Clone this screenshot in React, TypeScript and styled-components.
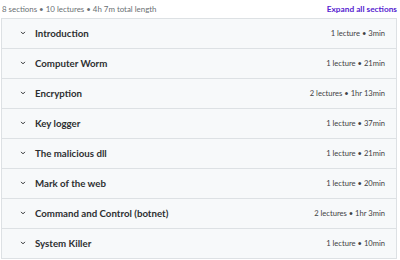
import { createGlobalStyle } from 'styled-components';
import styled from 'styled-components';

const GlobalStyle = createGlobalStyle`
  html, body {
    margin: 0;
    padding: 0;
    background: #ffffff;
    font-family: Lato, "Noto Sans", sans-serif;
    color: #2d2f31;
  }
`;

const Page = styled.div`
  width: 396px;
  padding: 0 0 0 1px;
`;

const Summary = styled.div`
  display: flex;
  align-items: center;
  justify-content: space-between;
  height: 17px;
  padding: 0 0 1px 1px;
`;

const Stats = styled.span`
  font-size: 7.9px;
  color: #6a6f73;
`;

const ExpandAll = styled.button`
  border: none;
  background: none;
  padding: 0;
  font-family: inherit;
  font-size: 8.3px;
  font-weight: 700;
  color: #5624d0;
  cursor: pointer;
`;

const Sections = styled.div`
  border: 1px solid #dde1e4;
  border-bottom: none;
`;

const Row = styled.div`
  display: flex;
  align-items: center;
  height: 29px;
  padding: 0 11px 1px 17px;
  box-sizing: border-box;
  background: #f7f9fa;
  border-bottom: 1px solid #dde1e4;
  height: 30px;
`;

const Chevron = styled.svg`
  width: 8px;
  height: 8px;
  margin-right: 8px;
  flex: none;
`;

const Title = styled.span`
  flex: 1;
  font-size: 9.7px;
  font-weight: 700;
  color: #2d2f31;
`;

const Meta = styled.span`
  font-size: 7.6px;
  color: #3e4143;
`;

const sections = [
  ['Introduction', '1 lecture', '3min'],
  ['Computer Worm', '1 lecture', '21min'],
  ['Encryption', '2 lectures', '1hr 13min'],
  ['Key logger', '1 lecture', '37min'],
  ['The malicious dll', '1 lecture', '21min'],
  ['Mark of the web', '1 lecture', '20min'],
  ['Command and Control (botnet)', '2 lectures', '1hr 3min'],
  ['System Killer', '1 lecture', '10min'],
];

export default function App() {
  return (
    <>
      <GlobalStyle />
      <Page>
        <Summary>
          <Stats>8 sections • 10 lectures • 4h 7m total length</Stats>
          <ExpandAll>Expand all sections</ExpandAll>
        </Summary>
        <Sections>
          {sections.map(([title, count, length]) => (
            <Row key={title}>
              <Chevron viewBox="0 0 24 24" fill="none" stroke="#2d2f31" strokeWidth="3" strokeLinecap="round" strokeLinejoin="round">
                <path d="M7 9.5l5 5 5-5" />
              </Chevron>
              <Title>{title}</Title>
              <Meta>
                {count} • {length}
              </Meta>
            </Row>
          ))}
        </Sections>
      </Page>
    </>
  );
}
